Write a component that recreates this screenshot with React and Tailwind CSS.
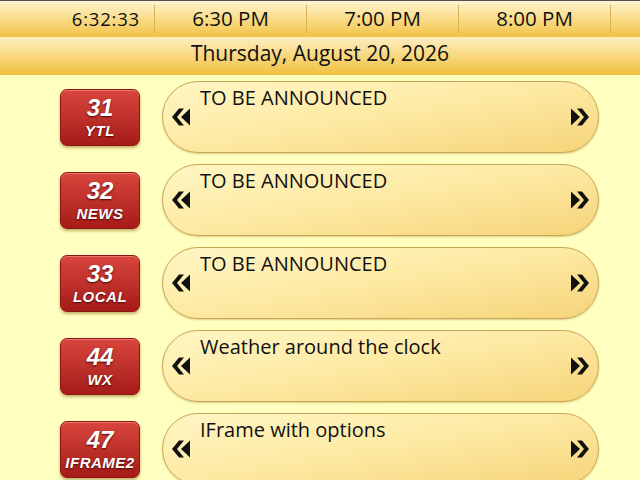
import React from 'react';

const channels = [
  { num: '31', name: 'YTL', title: 'TO BE ANNOUNCED' },
  { num: '32', name: 'NEWS', title: 'TO BE ANNOUNCED' },
  { num: '33', name: 'LOCAL', title: 'TO BE ANNOUNCED' },
  { num: '44', name: 'WX', title: 'Weather around the clock' },
  { num: '47', name: 'IFRAME2', title: 'IFrame with options' },
];

const slots = ['6:30 PM', '7:00 PM', '8:00 PM'];

// chevron tip on the left, solid triangle behind it
const LeftArrows = () => (
  <svg width="18" height="18" viewBox="0 0 18 18" className="shrink-0">
    <polygon points="12,0.5 7,0.5 0,9 7,17.5 12,17.5 5,9" fill="#111" />
    <polygon points="18,0.5 9,9 18,17.5" fill="#111" />
  </svg>
);

const RightArrows = () => (
  <svg width="18" height="18" viewBox="0 0 18 18" className="shrink-0">
    <polygon points="0,0.5 9,9 0,17.5" fill="#111" />
    <polygon points="6,0.5 11,0.5 18,9 11,17.5 6,17.5 13,9" fill="#111" />
  </svg>
);

const Badge = ({ num, name }) => (
  <div className="w-[80px] h-[57px] shrink-0 rounded-[7px] bg-gradient-to-b from-[#d8453c] to-[#a61a18] border border-[#8e1614] shadow-[0_2px_3px_rgba(120,80,0,0.45),inset_0_1px_0_rgba(255,170,160,0.5)] flex flex-col items-center justify-center font-['Liberation_Sans',Arial,sans-serif] italic font-bold text-white [text-shadow:0_1px_2px_rgba(60,0,0,0.9)] leading-none">
    <span className="text-[24px]">{num}</span>
    <span className="text-[15px] mt-[3px] tracking-[0.5px]">{name}</span>
  </div>
);

export default function App() {
  return (
    <div className="w-[640px] h-[480px] overflow-hidden bg-[#ffffbf] font-['Open_Sans','Noto_Sans',sans-serif] text-[#111]">
      {/* time bar */}
      <div className="h-[37px] flex border-t border-[#555] bg-gradient-to-b from-[#fff4cf] via-[#f9dc86] to-[#f2c244]">
        <div className="w-[154px] flex items-center justify-end pr-[14px] text-[18.5px] tracking-[0.8px] pb-[1px]">6:32:33</div>
        {slots.map((s) => (
          <div key={s} className="w-[152px] flex items-center justify-center text-[20.5px] border-l border-[#d9b25a] my-[4px] pb-[1px]">
            {s}
          </div>
        ))}
        <div className="flex-1 border-l border-[#d9b25a] my-[4px]" />
      </div>
      {/* date bar */}
      <div className="h-[38px] flex items-center justify-center text-[21px] pb-[4px] bg-gradient-to-b from-[#fdeec2] via-[#f8d77c] to-[#f1bf3c]">
        Thursday, August 20, 2026
      </div>
      {/* rows */}
      <div className="flex flex-col gap-[11px] pt-[6px]">
        {channels.map((c) => (
          <div key={c.num} className="flex items-center gap-[22px] pl-[60px]">
            <Badge num={c.num} name={c.name} />
            <div className="w-[437px] h-[72px] shrink-0 rounded-full border border-[#c9a657] bg-gradient-to-br from-[#fff6c4] via-[#fde9a2] to-[#f6d479] shadow-[0_1px_2px_rgba(150,110,20,0.35)] flex items-center pl-[9px] pr-[9px]">
              <LeftArrows />
              <div className="flex-1 self-stretch pl-[10px] pt-[2px] text-[20px] leading-[28px]">{c.title}</div>
              <RightArrows />
            </div>
          </div>
        ))}
      </div>
    </div>
  );
}
